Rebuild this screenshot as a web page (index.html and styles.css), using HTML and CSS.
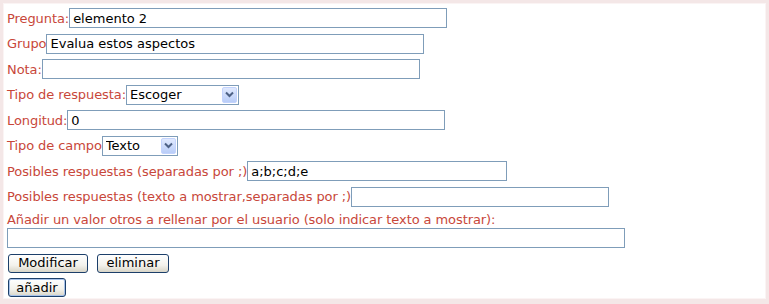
FILE: index.html
```html
<!DOCTYPE html>
<html>
<head>
<meta charset="utf-8">
<link rel="stylesheet" href="styles.css">
</head>
<body>
<div class="box">
  <form class="form">
    <div class="row"><label class="lbl">Pregunta:</label><input class="txt w378" type="text" value="elemento 2"></div>
    <div class="row"><label class="lbl">Grupo</label><input class="txt w378" type="text" value="Evalua estos aspectos"></div>
    <div class="row"><label class="lbl">Nota:</label><input class="txt w378" type="text" value=""></div>
    <div class="row"><label class="lbl">Tipo de respuesta:</label>
      <span class="sel w113"><select><option>Escoger</option></select><span class="arrow"><svg width="9" height="7" viewBox="0 0 9 7"><path d="M1 1.5 L4.5 5 L8 1.5" fill="none" stroke="#4d6185" stroke-width="2"/></svg></span></span>
    </div>
    <div class="row"><label class="lbl">Longitud:</label><input class="txt w378" type="text" value="0"></div>
    <div class="row"><label class="lbl">Tipo de campo</label>
      <span class="sel w76"><select><option>Texto</option></select><span class="arrow"><svg width="9" height="7" viewBox="0 0 9 7"><path d="M1 1.5 L4.5 5 L8 1.5" fill="none" stroke="#4d6185" stroke-width="2"/></svg></span></span>
    </div>
    <div class="row"><label class="lbl">Posibles respuestas (separadas por ;)</label><input class="txt w260" type="text" value="a;b;c;d;e"></div>
    <div class="row"><label class="lbl">Posibles respuestas (texto a mostrar,separadas por ;)</label><input class="txt w258" type="text" value=""></div>
    <div class="block">
      <div class="lbl line">Añadir un valor otros a rellenar por el usuario (solo indicar texto a mostrar):</div>
      <input class="txt w618" type="text" value="">
    </div>
    <div class="btns">
      <button type="button" class="btn w80">Modificar</button>
      <button type="button" class="btn w72">eliminar</button>
    </div>
    <div class="btns">
      <button type="button" class="btn w58 def">añadir</button>
    </div>
  </form>
</div>
</body>
</html>
```
FILE: styles.css
```css
html, body {
  margin: 0;
  padding: 0;
  background: #f4e7e7;
  font-family: "DejaVu Sans", Verdana, sans-serif;
  font-size: 13px;
}
.box {
  margin: 3px;
  height: 296px;
  box-sizing: border-box;
  background: #fff;
  border: 1px solid #fbf4f4;
  padding: 4px 3px 0 3px;
}
.form {
  display: flex;
  flex-direction: column;
  gap: 5.5px;
}
.row {
  display: flex;
  align-items: center;
  height: 20px;
}
.lbl {
  color: #c8473a;
  white-space: nowrap;
  letter-spacing: -0.08px;
}
.txt {
  height: 20px;
  box-sizing: border-box;
  border: 1px solid #7f9db9;
  padding: 0 3px;
  margin: 0;
  font-family: "DejaVu Sans", Verdana, sans-serif;
  font-size: 13px;
  color: #000;
  background: #fff;
  outline: none;
}
.w378 { width: 378px; }
.w260 { width: 260px; }
.w258 { width: 258px; }
.w618 { width: 618px; }
.sel {
  position: relative;
  display: inline-block;
  height: 20px;
}
.sel select {
  appearance: none;
  -webkit-appearance: none;
  width: 100%;
  height: 20px;
  box-sizing: border-box;
  border: 1px solid #7f9db9;
  border-radius: 0;
  background: #fff;
  padding: 0 0 0 3px;
  margin: 0;
  font-family: "DejaVu Sans", Verdana, sans-serif;
  font-size: 13px;
  color: #000;
}
.w113 { width: 113px; }
.w76 { width: 76px; }
.arrow {
  position: absolute;
  right: 2px;
  top: 2px;
  width: 15px;
  height: 16px;
  box-sizing: border-box;
  border: 1px solid #c3d3fd;
  border-radius: 2px;
  background: linear-gradient(#e0e9fe, #b9cdf8);
  display: flex;
  align-items: center;
  justify-content: center;
}
.block {
  display: flex;
  flex-direction: column;
}
.line {
  line-height: 16px;
  height: 16px;
}
.btns {
  display: flex;
  gap: 9px;
  padding-left: 1px;
}
.btn {
  height: 19px;
  box-sizing: border-box;
  border: 1px solid #1c3f6a;
  border-radius: 3px;
  background: linear-gradient(#ffffff, #f3f2ec 60%, #d8d5c8);
  font-family: "DejaVu Sans", Verdana, sans-serif;
  font-size: 13px;
  color: #000;
  padding: 0;
  margin: 0;
  line-height: 16px;
}
.btn.def {
  border-color: #1c3f6a;
  box-shadow: inset 0 0 0 1px #a7c2ea;
}
.w80 { width: 80px; }
.w72 { width: 72px; }
.w58 { width: 58px; }
```
